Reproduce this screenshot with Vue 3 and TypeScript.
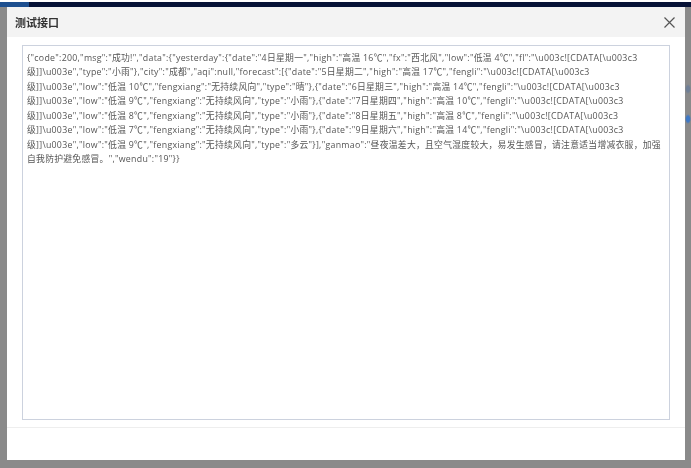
<script setup lang="ts">
const cd = '"\\u003c![CDATA[\\u003c3'
const lines: string[] = [
  `{"code":200,"msg":"成功!","data":{"yesterday":{"date":"4日星期一","high":"高温 16℃","fx":"西北风","low":"低温 4℃","fl":${cd}`,
  `级]]\\u003e","type":"小雨"},"city":"成都","aqi":null,"forecast":[{"date":"5日星期二","high":"高温 17℃","fengli":${cd}`,
  `级]]\\u003e","low":"低温 10℃","fengxiang":"无持续风向","type":"晴"},{"date":"6日星期三","high":"高温 14℃","fengli":${cd}`,
  `级]]\\u003e","low":"低温 9℃","fengxiang":"无持续风向","type":"小雨"},{"date":"7日星期四","high":"高温 10℃","fengli":${cd}`,
  `级]]\\u003e","low":"低温 8℃","fengxiang":"无持续风向","type":"小雨"},{"date":"8日星期五","high":"高温 8℃","fengli":${cd}`,
  `级]]\\u003e","low":"低温 7℃","fengxiang":"无持续风向","type":"小雨"},{"date":"9日星期六","high":"高温 14℃","fengli":${cd}`,
  `级]]\\u003e","low":"低温 9℃","fengxiang":"无持续风向","type":"多云"}],"ganmao":"昼夜温差大，且空气湿度较大，易发生感冒，请注意适当增减衣服，加强`,
  `自我防护避免感冒。","wendu":"19"}}`,
]
</script>

<template>
  <div class="page">
    <div class="topbar">
      <div class="topbar-blue"></div>
      <div class="topbar-navy"></div>
    </div>
    <section class="dialog">
      <header class="head">
        <h2 class="title">测试接口</h2>
        <svg class="close" width="11" height="11" viewBox="0 0 11 11" aria-label="关闭">
          <path d="M0.5 0.5L10.5 10.5M10.5 0.5L0.5 10.5" stroke="#555" stroke-width="1.2" fill="none" />
        </svg>
      </header>
      <div class="body">
        <div class="output">
          <div v-for="(l, i) in lines" :key="i" class="line">{{ l }}</div>
        </div>
      </div>
      <footer class="foot"></footer>
    </section>
  </div>
</template>

<style>
html, body { margin: 0; background: #878787; }
</style>

<style scoped>
.page {
  width: 691px;
  height: 468px;
  box-sizing: border-box;
  background:
    radial-gradient(ellipse 3px 5px at 688px 119px, #3f78c4 0 55%, transparent 100%),
    radial-gradient(ellipse 3px 5px at 688px 89px, #6f7f96 0 55%, transparent 100%),
    #8a8a8a;
  overflow: hidden;
  font-family: "Open Sans", "Noto Sans CJK SC", sans-serif;
  filter: blur(0.35px);
}
.topbar { display: flex; height: 7px; padding-top: 2px; box-sizing: border-box; background: #fff; }
.topbar-blue { width: 29px; background: #1d4f8f; }
.topbar-navy { flex: 1; background: #061236; }
.dialog {
  margin: 0 6px 0 7px;
  height: 453px;
  display: flex;
  flex-direction: column;
  background: #fff;
}
.head {
  height: 30px;
  flex: none;
  display: flex;
  align-items: center;
  justify-content: space-between;
  padding: 0 10px 0 8px;
  background: #f3f3f3;
}
.title { margin: 0; font-size: 11px; font-weight: 700; color: #333; }
.body { flex: 1; padding: 8px 15px 7px 15px; display: flex; }
.output {
  flex: 1;
  box-sizing: border-box;
  border: 1px solid #ccd2de;
  padding: 5px 4px;
  font-size: 8.8px;
  letter-spacing: 0.275px;
  line-height: 14.45px;
  color: #555;
  overflow: hidden;
}
.line { white-space: nowrap; }
.foot { height: 33px; flex: none; border-top: 1px solid #eee; box-sizing: border-box; }
</style>
